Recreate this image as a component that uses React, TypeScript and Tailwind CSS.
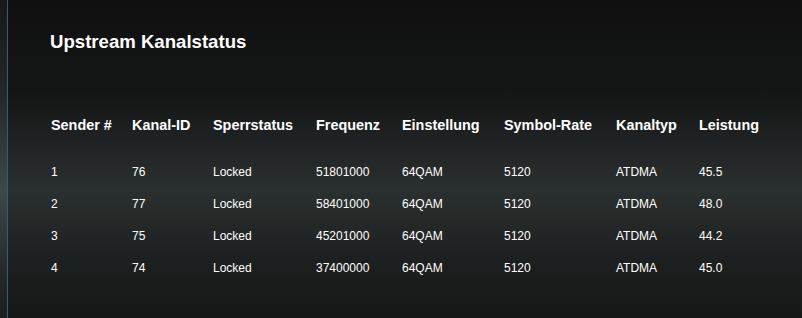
import React from "react";

const headers = ["Sender #", "Kanal-ID", "Sperrstatus", "Frequenz", "Einstellung", "Symbol-Rate", "Kanaltyp", "Leistung"];
const rows = [
  ["1", "76", "Locked", "51801000", "64QAM", "5120", "ATDMA", "45.5"],
  ["2", "77", "Locked", "58401000", "64QAM", "5120", "ATDMA", "48.0"],
  ["3", "75", "Locked", "45201000", "64QAM", "5120", "ATDMA", "44.2"],
  ["4", "74", "Locked", "37400000", "64QAM", "5120", "ATDMA", "45.0"],
];

const cols = "grid grid-cols-[81px_81px_103px_86px_102px_112px_83px_1fr]";

export default function App() {
  return (
    <div
      className="flex h-[318px] w-[802px] overflow-hidden text-white"
      style={{ fontFamily: '"Liberation Sans", Arial, sans-serif' }}
    >
      <div className="w-[7px] shrink-0 bg-[linear-gradient(to_bottom,#181818_0%,#252828_30%,#3e4947_60%,#262a29_85%,#1c1d1d_100%)]" />
      <div className="w-px shrink-0 bg-[#2f5f70]" />
      <div className="flex flex-1 flex-col pl-[42px] bg-[linear-gradient(to_bottom,#101010_0%,#141515_28%,#222626_48%,#2a302f_60%,#1e2121_80%,#161717_100%)]">
        <h1 className="mt-[31px] h-[22px] text-[18.6px] font-bold leading-[22px]">Upstream Kanalstatus</h1>
        <div className={`${cols} mt-[56px] h-[32px] items-center text-[14.4px] font-bold leading-[16px]`}>
          {headers.map((h) => (
            <div key={h} className="pl-px">{h}</div>
          ))}
        </div>
        <div className="mt-[15px] flex flex-col">
          {rows.map((r, i) => (
            <div key={i} className={`${cols} h-[32px] items-center text-[12px] leading-[14px]`}>
              {r.map((c, j) => (
                <div key={j} className="pl-px">{c}</div>
              ))}
            </div>
          ))}
        </div>
      </div>
    </div>
  );
}
